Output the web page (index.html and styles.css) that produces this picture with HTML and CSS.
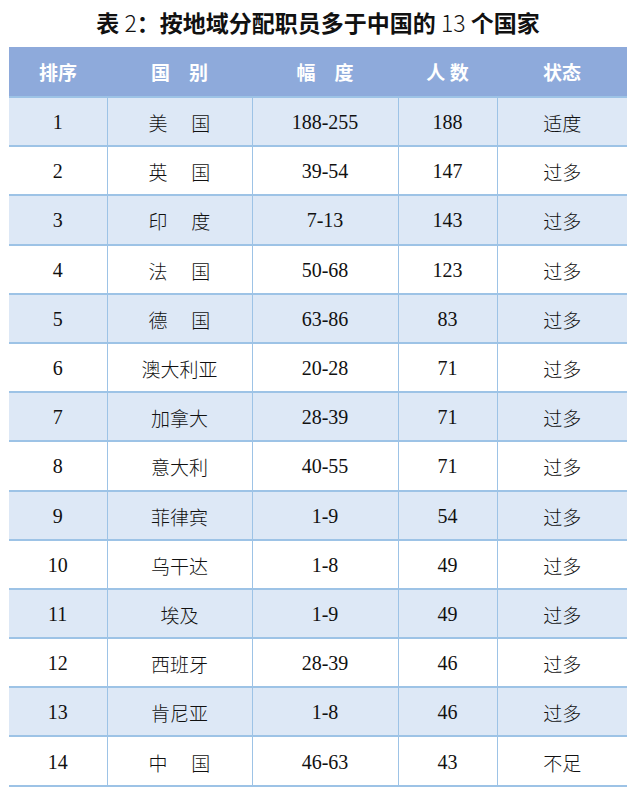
FILE: index.html
```html
<!DOCTYPE html>
<html lang="zh">
<head>
<meta charset="utf-8">
<link rel="stylesheet" href="styles.css">
</head>
<body>
<div class="page">
  <h1 class="title">表 <span class="num">2</span>：按地域分配职员多于中国的 <span class="num">13</span> 个国家</h1>
  <table class="data">
    <colgroup>
      <col class="c1"><col class="c2"><col class="c3"><col class="c4"><col class="c5">
    </colgroup>
    <thead>
      <tr><th>排序</th><th>国　别</th><th>幅　度</th><th>人 数</th><th>状态</th></tr>
    </thead>
    <tbody>
      <tr class="alt"><td>1</td><td>美　 国</td><td>188-255</td><td>188</td><td>适度</td></tr>
      <tr><td>2</td><td>英　 国</td><td>39-54</td><td>147</td><td>过多</td></tr>
      <tr class="alt"><td>3</td><td>印　 度</td><td>7-13</td><td>143</td><td>过多</td></tr>
      <tr><td>4</td><td>法　 国</td><td>50-68</td><td>123</td><td>过多</td></tr>
      <tr class="alt"><td>5</td><td>德　 国</td><td>63-86</td><td>83</td><td>过多</td></tr>
      <tr><td>6</td><td>澳大利亚</td><td>20-28</td><td>71</td><td>过多</td></tr>
      <tr class="alt"><td>7</td><td>加拿大</td><td>28-39</td><td>71</td><td>过多</td></tr>
      <tr><td>8</td><td>意大利</td><td>40-55</td><td>71</td><td>过多</td></tr>
      <tr class="alt"><td>9</td><td>菲律宾</td><td>1-9</td><td>54</td><td>过多</td></tr>
      <tr><td>10</td><td>乌干达</td><td>1-8</td><td>49</td><td>过多</td></tr>
      <tr class="alt"><td>11</td><td>埃及</td><td>1-9</td><td>49</td><td>过多</td></tr>
      <tr><td>12</td><td>西班牙</td><td>28-39</td><td>46</td><td>过多</td></tr>
      <tr class="alt"><td>13</td><td>肯尼亚</td><td>1-8</td><td>46</td><td>过多</td></tr>
      <tr><td>14</td><td>中　 国</td><td>46-63</td><td>43</td><td>不足</td></tr>
    </tbody>
  </table>
</div>
</body>
</html>
```
FILE: styles.css
```css
html, body {
  margin: 0;
  padding: 0;
  background: #ffffff;
}
.page {
  width: 618px;
  padding: 0 11px 0 9px;
}
.title {
  margin: 0;
  height: 47px;
  line-height: 44px;
  text-align: center;
  font-family: "Noto Sans CJK SC", sans-serif;
  font-weight: 700;
  font-size: 23px;
  color: #111;
}
.title .num {
  font-weight: 300;
  font-family: "Noto Sans CJK SC", sans-serif;
}
.data {
  width: 618px;
  border-collapse: collapse;
  table-layout: fixed;
}
.c1 { width: 98px; }
.c2 { width: 145px; }
.c3 { width: 146px; }
.c4 { width: 99px; }
.c5 { width: 130px; }
.data th {
  height: 49px;
  padding: 0;
  background: #8eaadb;
  color: #ffffff;
  font-family: "Noto Sans CJK SC", sans-serif;
  font-weight: 700;
  font-size: 19px;
  border-bottom: 2px solid #9dc3e6;
}
.data td {
  height: 45.2px;
  padding: 2px 0 0 0;
  text-align: center;
  font-family: "Liberation Serif", "Noto Sans CJK SC", serif;
  font-size: 20px;
  color: #111;
  border-bottom: 2px solid #9dc3e6;
  border-left: 1px solid #9dc3e6;
}
.data td:first-child {
  border-left: none;
}
.data tr.alt td {
  background: #dde8f6;
}
.data td:nth-child(2), .data td:nth-child(5) {
  font-weight: 300;
  font-size: 19px;
}
```
